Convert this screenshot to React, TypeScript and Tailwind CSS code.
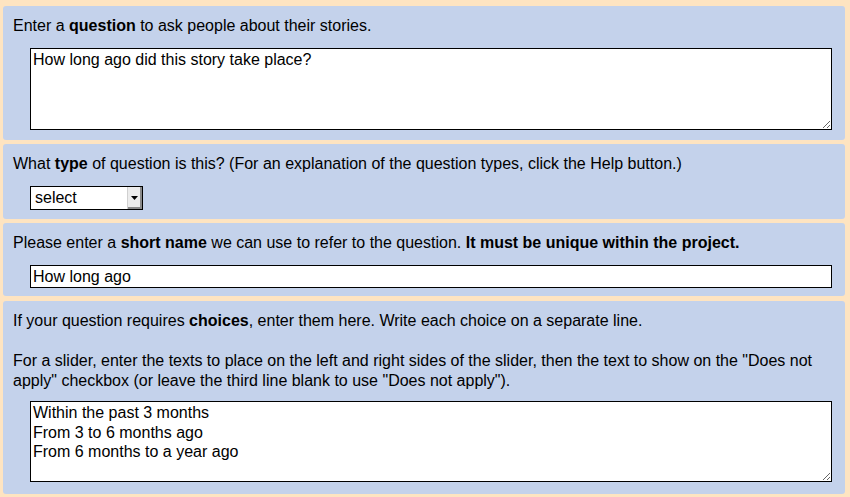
import React from "react";

const Panel: React.FC<{ children: React.ReactNode; className?: string }> = ({
  children,
  className = "",
}) => (
  <div className={`rounded-[3px] bg-[#c4d2eb] pl-[10px] pr-[13px] ${className}`}>
    {children}
  </div>
);

export default function App() {
  return (
    <div className="min-h-screen bg-[#fee4c1] px-[3px] pr-[5px] pt-[6px] pb-[3px] font-['Liberation_Sans',Arial,sans-serif] text-[16px] leading-[20px] text-black">
      <div className="flex flex-col gap-[4px]">
        {/* Question text */}
        <Panel className="pt-[10px] pb-[10px]">
          <p>
            Enter a <b>question</b> to ask people about their stories.
          </p>
          <textarea
            readOnly
            defaultValue="How long ago did this story take place?"
            className="mt-[12px] ml-[17px] block h-[82px] w-[802px] border border-black bg-white px-[2px] py-[1px] text-[16px] leading-[20px] outline-none"
          />
        </Panel>

        {/* Question type */}
        <Panel className="pt-[10px] pb-[9px]">
          <p>
            What <b>type</b> of question is this? (For an explanation of the
            question types, click the Help button.)
          </p>
          <div className="mt-[12px] ml-[17px] flex h-[24px] w-[113px] items-stretch border border-black bg-white">
            <span className="flex-1 pl-[4px] leading-[22px]">select</span>
            <span className="flex w-[15px] items-center justify-center border-l border-[#d0d0d0] bg-[#ececec] shadow-[inset_-2px_-2px_0_#8a8a8a]">
              <svg width="7" height="4" viewBox="0 0 7 4" className="mb-[1px] mr-[1px]">
                <path d="M0 0h7L3.5 4z" fill="#000" />
              </svg>
            </span>
          </div>
        </Panel>

        {/* Short name */}
        <Panel className="pt-[10px] pb-[8px]">
          <p>
            Please enter a <b>short name</b> we can use to refer to the
            question. <b>It must be unique within the project.</b>
          </p>
          <input
            readOnly
            defaultValue="How long ago"
            className="mt-[12px] ml-[17px] block h-[23px] w-[802px] border border-black bg-white px-[2px] text-[16px] outline-none"
          />
        </Panel>

        {/* Choices */}
        <Panel className="mt-[1px] pt-[10px] pb-[12px]">
          <p>
            If your question requires <b>choices</b>, enter them here. Write
            each choice on a separate line.
          </p>
          <p className="mt-[20px] whitespace-nowrap">
            For a slider, enter the texts to place on the left and right sides
            of the slider, then the text to show on the "Does not
            <br />
            apply" checkbox (or leave the third line blank to use "Does not
            apply").
          </p>
          <textarea
            readOnly
            defaultValue={
              "Within the past 3 months\nFrom 3 to 6 months ago\nFrom 6 months to a year ago"
            }
            className="mt-[10px] ml-[17px] block h-[81px] w-[802px] border border-black bg-white px-[2px] py-[1px] text-[16px] leading-[19.5px] outline-none"
          />
        </Panel>
      </div>
    </div>
  );
}
